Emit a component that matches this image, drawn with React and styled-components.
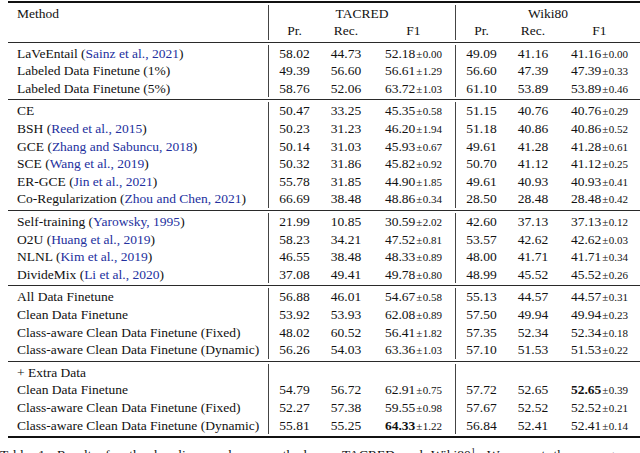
import React from "react"
import styled, { createGlobalStyle } from "styled-components"

const GlobalStyle = createGlobalStyle`
    html, body {
        margin: 0;
        padding: 0;
        background: #fff;
        overflow: hidden;
    }
    body {
        font-family: "Liberation Serif", "Times New Roman", serif;
        color: #111;
    }
`

const groups = [
    [
        { method: "LaVeEntail", cite: "Sainz et al., 2021", t: ["58.02", "44.73", "52.18", "0.00"], w: ["49.09", "41.16", "41.16", "0.00"] },
        { method: "Labeled Data Finetune (1%)", t: ["49.39", "56.60", "56.61", "1.29"], w: ["56.60", "47.39", "47.39", "0.33"] },
        { method: "Labeled Data Finetune (5%)", t: ["58.76", "52.06", "63.72", "1.03"], w: ["61.10", "53.89", "53.89", "0.46"] },
    ],
    [
        { method: "CE", t: ["50.47", "33.25", "45.35", "0.58"], w: ["51.15", "40.76", "40.76", "0.29"] },
        { method: "BSH", cite: "Reed et al., 2015", t: ["50.23", "31.23", "46.20", "1.94"], w: ["51.18", "40.86", "40.86", "0.52"] },
        { method: "GCE", cite: "Zhang and Sabuncu, 2018", t: ["50.14", "31.03", "45.93", "0.67"], w: ["49.61", "41.28", "41.28", "0.61"] },
        { method: "SCE", cite: "Wang et al., 2019", t: ["50.32", "31.86", "45.82", "0.92"], w: ["50.70", "41.12", "41.12", "0.25"] },
        { method: "ER-GCE", cite: "Jin et al., 2021", t: ["55.78", "31.85", "44.90", "1.85"], w: ["49.61", "40.93", "40.93", "0.41"] },
        { method: "Co-Regularization", cite: "Zhou and Chen, 2021", t: ["66.69", "38.48", "48.86", "0.34"], w: ["28.50", "28.48", "28.48", "0.42"] },
    ],
    [
        { method: "Self-training", cite: "Yarowsky, 1995", t: ["21.99", "10.85", "30.59", "2.02"], w: ["42.60", "37.13", "37.13", "0.12"] },
        { method: "O2U", cite: "Huang et al., 2019", t: ["58.23", "34.21", "47.52", "0.81"], w: ["53.57", "42.62", "42.62", "0.03"] },
        { method: "NLNL", cite: "Kim et al., 2019", t: ["46.55", "38.48", "48.33", "0.89"], w: ["48.00", "41.71", "41.71", "0.34"] },
        { method: "DivideMix", cite: "Li et al., 2020", t: ["37.08", "49.41", "49.78", "0.80"], w: ["48.99", "45.52", "45.52", "0.26"] },
    ],
    [
        { method: "All Data Finetune", t: ["56.88", "46.01", "54.67", "0.58"], w: ["55.13", "44.57", "44.57", "0.31"] },
        { method: "Clean Data Finetune", t: ["53.92", "53.93", "62.08", "0.89"], w: ["57.50", "49.94", "49.94", "0.23"] },
        { method: "Class-aware Clean Data Finetune (Fixed)", t: ["48.02", "60.52", "56.41", "1.82"], w: ["57.35", "52.34", "52.34", "0.18"] },
        { method: "Class-aware Clean Data Finetune (Dynamic)", t: ["56.26", "54.03", "63.36", "1.03"], w: ["57.10", "51.53", "51.53", "0.22"] },
    ],
    [
        { method: "+ Extra Data" },
        { method: "Clean Data Finetune", t: ["54.79", "56.72", "62.91", "0.75"], w: ["57.72", "52.65", "52.65", "0.39"], bold: "w" },
        { method: "Class-aware Clean Data Finetune (Fixed)", t: ["52.27", "57.38", "59.55", "0.98"], w: ["57.67", "52.52", "52.52", "0.21"] },
        { method: "Class-aware Clean Data Finetune (Dynamic)", t: ["55.81", "55.25", "64.33", "1.22"], w: ["56.84", "52.41", "52.41", "0.14"], bold: "t" },
    ],
]

const widths = [260, 52, 52, 83, 52, 52, 81]

const Scores = ({ values, bold }) => {
    if (!values) {
        return (
            <>
                <NumCell $divider />
                <NumCell />
                <NumCell />
            </>
        )
    }
    const [pr, rec, f1, std] = values
    return (
        <>
            <NumCell $divider>{pr}</NumCell>
            <NumCell>{rec}</NumCell>
            <NumCell>
                {bold ? <Bold>{f1}</Bold> : f1}
                <Std><Pm>±</Pm>{std}</Std>
            </NumCell>
        </>
    )
}

const Rule = ({ kind }) => (
    <RuleRow>
        <RuleCell colSpan={7} $kind={kind}>
            <Line $thick={kind !== "mid"} />
        </RuleCell>
    </RuleRow>
)

export default function App() {
    return (
        <Page>
            <GlobalStyle />
            <Table>
                <colgroup>
                    {widths.map((w, i) => <col key={i} style={{ width: w }} />)}
                </colgroup>
                <thead>
                    <Rule kind="top" />
                    <Row>
                        <MethodCell rowSpan={2} $top>Method</MethodCell>
                        <HeadCell colSpan={3} $divider>TACRED</HeadCell>
                        <HeadCell colSpan={3} $divider>Wiki80</HeadCell>
                    </Row>
                    <Row>
                        <HeadCell $divider>Pr.</HeadCell>
                        <HeadCell>Rec.</HeadCell>
                        <HeadCell>F1</HeadCell>
                        <HeadCell $divider>Pr.</HeadCell>
                        <HeadCell>Rec.</HeadCell>
                        <HeadCell>F1</HeadCell>
                    </Row>
                </thead>
                <tbody>
                    {groups.map((rows, g) => (
                        <React.Fragment key={g}>
                            <Rule kind="mid" />
                            {rows.map((r, i) => (
                                <Row key={i}>
                                    <MethodCell>
                                        {r.method}
                                        {r.cite && <> (<Cite>{r.cite}</Cite>)</>}
                                    </MethodCell>
                                    <Scores values={r.t} bold={r.bold === "t"} />
                                    <Scores values={r.w} bold={r.bold === "w"} />
                                </Row>
                            ))}
                        </React.Fragment>
                    ))}
                    <Rule kind="bottom" />
                </tbody>
            </Table>
            <Caption>
                Table 1: Results for the baselines and our methods on TACRED and Wiki80<Sup>1</Sup>. We report the average
            </Caption>
        </Page>
    )
}

const serif = `"Liberation Serif", "Times New Roman", serif`

const Page = styled.div`
    width: 640px;
    height: 453px;
    overflow: hidden;
    padding-top: 1px;
    box-sizing: border-box;
    font-family: ${serif};
`

const Table = styled.table`
    margin-left: 8px;
    width: 632px;
    table-layout: fixed;
    border-collapse: separate;
    border-spacing: 0;
    font-family: ${serif};
    font-size: 13.5px;
    line-height: 17.6px;
    color: #111;
`

const Row = styled.tr`
    height: 17.6px;
`

const RuleRow = styled.tr`
    line-height: 0;
    font-size: 0;
`

const RuleCell = styled.td`
    padding: ${(p) => p.$kind === "top" ? "0 0 1.5px" : p.$kind === "bottom" ? "2px 0 0" : "2px 0"};
    line-height: 0;
    font-size: 0;
`

const Line = styled.div`
    height: ${(p) => p.$thick ? "2px" : "1px"};
    background: ${(p) => p.$thick ? "#111" : "#2a2a2a"};
`

const MethodCell = styled.td`
    padding: 0 0 0 9px;
    height: 17.6px;
    text-align: left;
    vertical-align: ${(p) => p.$top ? "top" : "middle"};
    white-space: nowrap;
`

const HeadCell = styled.th`
    padding: 0;
    height: 17.6px;
    font-weight: normal;
    text-align: center;
    white-space: nowrap;
    border-left: ${(p) => p.$divider ? "1px solid #444" : "none"};
`

const NumCell = styled.td`
    padding: 0;
    height: 17.6px;
    text-align: center;
    white-space: nowrap;
    border-left: ${(p) => p.$divider ? "1px solid #444" : "none"};
`

const Bold = styled.b`
    font-weight: bold;
`

const Std = styled.span`
    font-size: 11px;
    line-height: 0;
`

const Pm = styled.span`
    margin: 0 0.5px 0 1px;
`

const Cite = styled.span`
    color: #23309e;
`

const Caption = styled.div`
    margin-top: 9px;
    font-family: ${serif};
    font-size: 13.5px;
    line-height: 16px;
    white-space: nowrap;
    word-spacing: 5px;
    color: #111;
`

const Sup = styled.sup`
    font-size: 9px;
    line-height: 0;
`
